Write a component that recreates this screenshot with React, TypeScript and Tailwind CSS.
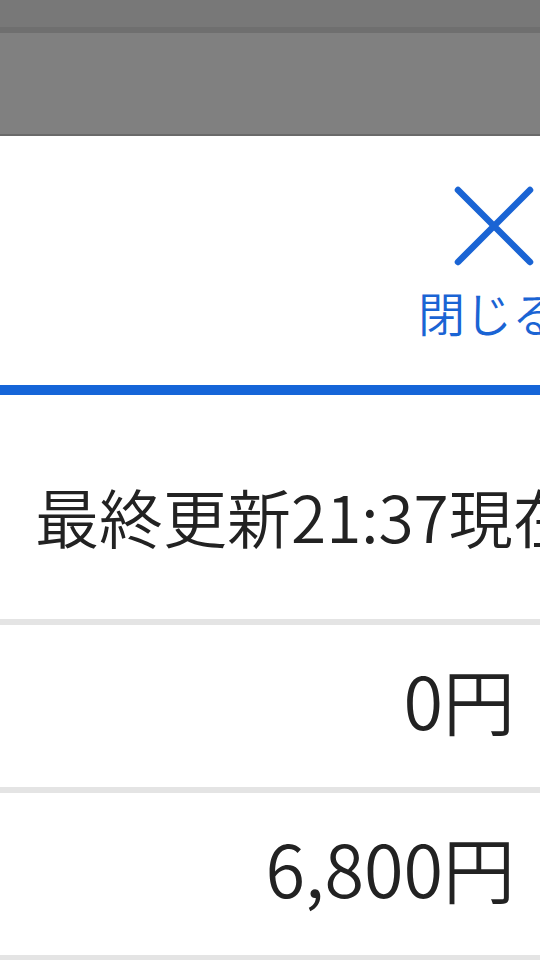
import React from "react";

const ROWS = ["0円", "6,800円"] as const;

function CloseIcon() {
  return (
    <svg width="80" height="80" viewBox="0 0 80 80" fill="none" aria-hidden="true">
      <path d="M4 4 L76 76 M76 4 L4 76" stroke="#1a64d4" strokeWidth="6.5" strokeLinecap="round" />
    </svg>
  );
}

export default function App() {
  return (
    <div
      className="h-[960px] w-[540px] overflow-hidden bg-white font-[350] text-[#222222]"
      style={{ fontFamily: '"Noto Sans CJK JP", "Noto Sans", sans-serif' }}
    >
      {/* dimmed page behind the sheet */}
      <div className="h-[27px] bg-[#787878]" />
      <div className="h-[6px] bg-[#6f6f6f]" />
      <div className="h-[101px] bg-[#808080]" />
      <div className="h-[2px] bg-[#6a6a6a]" />

      <header className="flex h-[249px] justify-start pl-[418px] pt-[50px]">
        <button className="flex shrink-0 flex-col items-start text-[#1a64d4]">
          <span className="ml-[36px] block">
            <CloseIcon />
          </span>
          <span className="mt-[22px] whitespace-nowrap text-[47px] leading-none">閉じる</span>
        </button>
      </header>
      <div className="h-[10px] bg-[#1565d8]" />

      <div className="h-[224px] whitespace-nowrap pl-[35px] pt-[88px] text-[64px] leading-none">
        最終更新21:37現在
      </div>
      <div className="h-[6px] bg-[#e4e4e4]" />

      {ROWS.map((value) => (
        <div key={value}>
          <div className="flex h-[162px] items-center justify-end pb-[14px] pr-[25px] text-[72px] leading-none">
            {value}
          </div>
          <div className="h-[6px] bg-[#e4e4e4]" />
        </div>
      ))}
    </div>
  );
}
